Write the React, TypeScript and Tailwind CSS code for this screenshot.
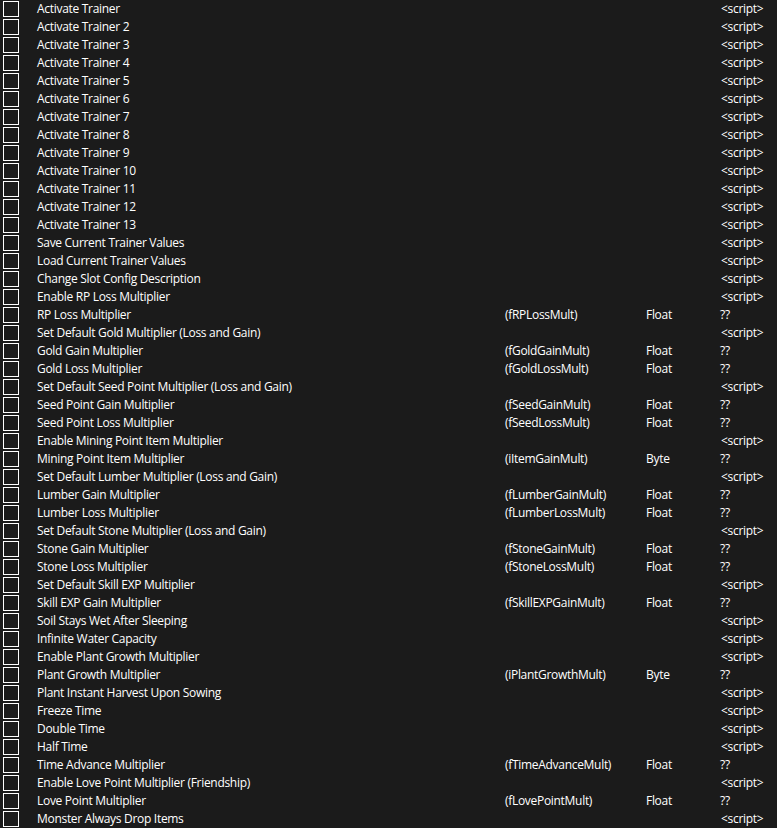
type Row = { name: string; addr?: string; type?: string; value: string };

const S = "<script>";

const rows: Row[] = [
  { name: "Activate Trainer", value: S },
  { name: "Activate Trainer 2", value: S },
  { name: "Activate Trainer 3", value: S },
  { name: "Activate Trainer 4", value: S },
  { name: "Activate Trainer 5", value: S },
  { name: "Activate Trainer 6", value: S },
  { name: "Activate Trainer 7", value: S },
  { name: "Activate Trainer 8", value: S },
  { name: "Activate Trainer 9", value: S },
  { name: "Activate Trainer 10", value: S },
  { name: "Activate Trainer 11", value: S },
  { name: "Activate Trainer 12", value: S },
  { name: "Activate Trainer 13", value: S },
  { name: "Save Current Trainer Values", value: S },
  { name: "Load Current Trainer Values", value: S },
  { name: "Change Slot Config Description", value: S },
  { name: "Enable RP Loss Multiplier", value: S },
  { name: "RP Loss Multiplier", addr: "(fRPLossMult)", type: "Float", value: "??" },
  { name: "Set Default Gold Multiplier (Loss and Gain)", value: S },
  { name: "Gold Gain Multiplier", addr: "(fGoldGainMult)", type: "Float", value: "??" },
  { name: "Gold Loss Multiplier", addr: "(fGoldLossMult)", type: "Float", value: "??" },
  { name: "Set Default Seed Point Multiplier (Loss and Gain)", value: S },
  { name: "Seed Point Gain Multiplier", addr: "(fSeedGainMult)", type: "Float", value: "??" },
  { name: "Seed Point Loss Multiplier", addr: "(fSeedLossMult)", type: "Float", value: "??" },
  { name: "Enable Mining Point Item Multiplier", value: S },
  { name: "Mining Point Item Multiplier", addr: "(iItemGainMult)", type: "Byte", value: "??" },
  { name: "Set Default Lumber Multiplier (Loss and Gain)", value: S },
  { name: "Lumber Gain Multiplier", addr: "(fLumberGainMult)", type: "Float", value: "??" },
  { name: "Lumber Loss Multiplier", addr: "(fLumberLossMult)", type: "Float", value: "??" },
  { name: "Set Default Stone Multiplier (Loss and Gain)", value: S },
  { name: "Stone Gain Multiplier", addr: "(fStoneGainMult)", type: "Float", value: "??" },
  { name: "Stone Loss Multiplier", addr: "(fStoneLossMult)", type: "Float", value: "??" },
  { name: "Set Default Skill EXP Multiplier", value: S },
  { name: "Skill EXP Gain Multiplier", addr: "(fSkillEXPGainMult)", type: "Float", value: "??" },
  { name: "Soil Stays Wet After Sleeping", value: S },
  { name: "Infinite Water Capacity", value: S },
  { name: "Enable Plant Growth Multiplier", value: S },
  { name: "Plant Growth Multiplier", addr: "(iPlantGrowthMult)", type: "Byte", value: "??" },
  { name: "Plant Instant Harvest Upon Sowing", value: S },
  { name: "Freeze Time", value: S },
  { name: "Double Time", value: S },
  { name: "Half Time", value: S },
  { name: "Time Advance Multiplier", addr: "(fTimeAdvanceMult)", type: "Float", value: "??" },
  { name: "Enable Love Point Multiplier (Friendship)", value: S },
  { name: "Love Point Multiplier", addr: "(fLovePointMult)", type: "Float", value: "??" },
  { name: "Monster Always Drop Items", value: S },
];

export default function App() {
  return (
    <div
      className="h-[828px] w-[777px] overflow-hidden bg-[#1b1b1b] text-[12px] leading-[18px] tracking-[-0.3px] text-white"
      style={{ fontFamily: '"Open Sans", "Noto Sans", sans-serif' }}
    >
      {rows.map((r, i) => (
        <div key={i} className="flex h-[18px] items-center whitespace-nowrap">
          <div className="ml-[3px] h-[16px] w-[16px] shrink-0 border border-white" />
          <div className="ml-[18px] w-[468px] shrink-0">{r.name}</div>
          <div className="w-[141px] shrink-0">{r.addr}</div>
          <div className="w-[74px] shrink-0">{r.type}</div>
          <div className={r.value === "??" ? "" : "ml-px"}>{r.value}</div>
        </div>
      ))}
    </div>
  );
}
